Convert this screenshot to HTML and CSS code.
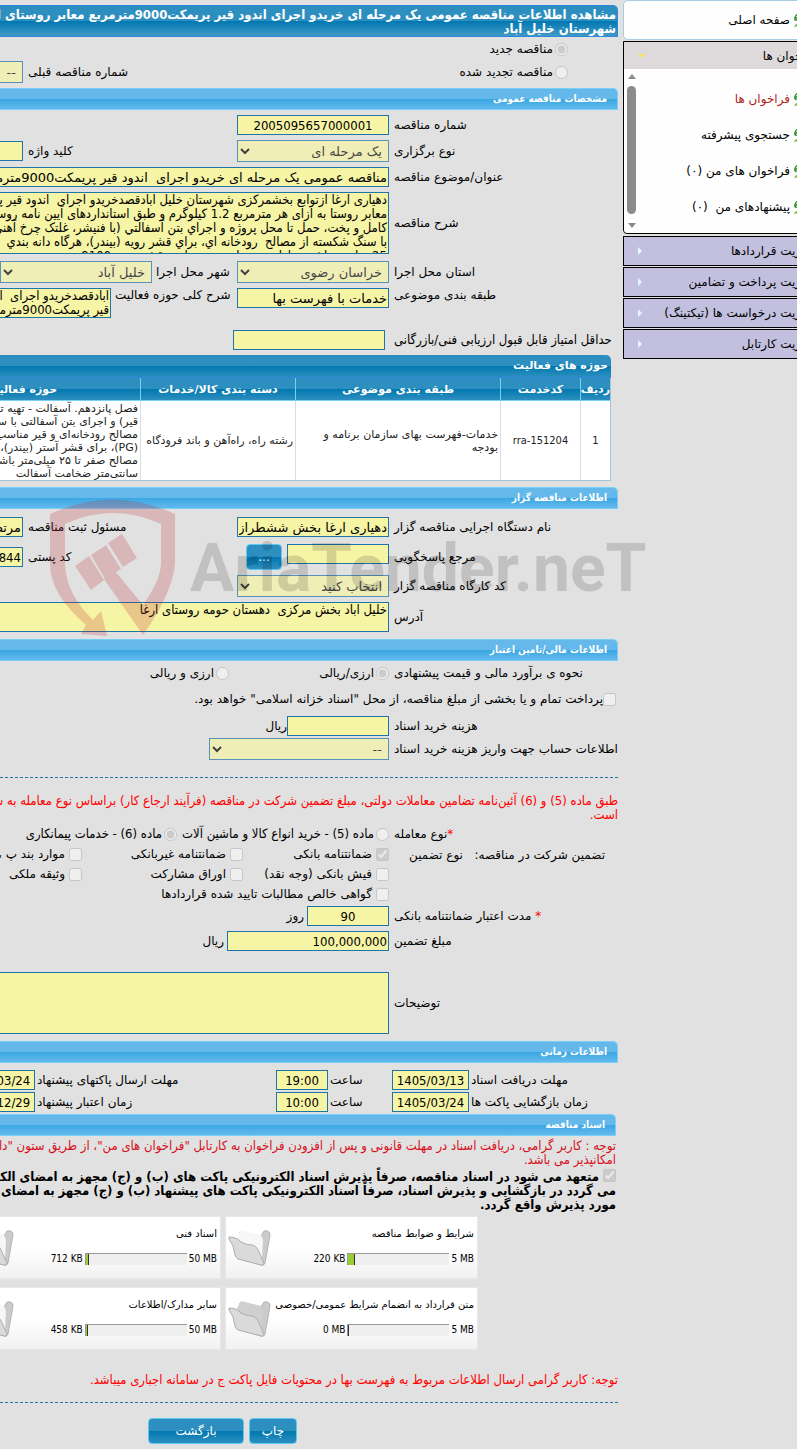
FILE: index.html
```html
<!DOCTYPE html>
<html lang="fa" dir="rtl">
<head>
<meta charset="utf-8">
<title>مشاهده اطلاعات مناقصه عمومی</title>
<link rel="stylesheet" href="styles.css">
</head>
<body>
<svg class="defs" aria-hidden="true">
  <symbol id="swirl" viewBox="0 0 18 18">
    <path d="M10 1C4 1 0 4 0 8q0 2 3 2C2 7 3 4 10 4z" fill="#3f9a35"/>
    <path d="M2 6q1-3 6-3" stroke="#c9ecbb" fill="none"/>
    <path d="M0 16c2-4 5-6 12-7-4 4-7 7-12 7z" fill="#7cbf3a"/>
  </symbol>
  <symbol id="folder" viewBox="0 0 44 40">
    <path d="M11 8L12 4 33 8 36 3Q42 2 42 7L37 35Q36 38 33 37L12 30Z" fill="#cbcbcb" stroke="#b4b4b4"/>
    <path class="paper" d="M9 9L13 2 33 7 35 12 34 30 14 24Z"/>
    <path d="M1 9Q9 9 13 14 18 17 24 17 29 18 31 24L36 35Q36 38 33 37L10 31Q8 30 7 27 6 17 1 11Z" fill="#dadada" stroke="#acacac"/>
  </symbol>
</svg>
<div class="page">
  <nav class="side">
    <div class="side-inner">
      <a class="home" href="#"><svg class="swirl"><use href="#swirl"/></svg>صفحه اصلی</a>
      <div class="group open">
        <button class="group-head" type="button">فراخوان ها<span class="tri down"></span></button>
        <div class="submenu">
          <div class="scroll"><span class="up"></span><span class="thumb"></span><span class="dn"></span></div>
          <a class="active" href="#"><svg class="swirl"><use href="#swirl"/></svg>فراخوان ها</a>
          <a href="#"><svg class="swirl"><use href="#swirl"/></svg>جستجوی پیشرفته</a>
          <a href="#"><svg class="swirl"><use href="#swirl"/></svg>فراخوان های من (۰)</a>
          <a href="#"><svg class="swirl"><use href="#swirl"/></svg>پیشنهادهای من &nbsp;(۰)</a>
        </div>
      </div>
      <button class="group-head closed" type="button">مدیریت قراردادها<span class="tri"></span></button>
      <button class="group-head closed" type="button">مدیریت پرداخت و تضامین<span class="tri"></span></button>
      <button class="group-head closed" type="button">مدیریت درخواست ها (تیکتینگ)<span class="tri"></span></button>
      <button class="group-head closed" type="button">مدیریت کارتابل<span class="tri"></span></button>
    </div>
  </nav>

  <main class="main">
    <h1 class="title">مشاهده اطلاعات مناقصه عمومی یک مرحله ای خریدو اجرای اندود قیر پریمکت9000مترمربع معابر روستای ارغا<br>شهرستان خلیل آباد</h1>

    <div class="row kind">
      <label class="opt"><input type="radio" name="kind" checked disabled>مناقصه جدید</label>
    </div>
    <div class="row kind">
      <label class="opt renewed"><input type="radio" name="kind" disabled>مناقصه تجدید شده</label>
      <label class="label2 previous" for="prev">شماره مناقصه قبلی</label>
      <select id="prev" disabled><option>--</option></select>
    </div>

    <h2 class="bar">مشخصات مناقصه عمومی</h2>
    <div class="row"><label class="label" for="num">شماره مناقصه</label><input class="mid num" id="num" value="2005095657000001" readonly></div>
    <div class="row">
      <label class="label" for="type">نوع برگزاری</label><select id="type" disabled><option>یک مرحله ای</option></select>
      <label class="label2" for="key">کلید واژه</label><input id="key" readonly>
    </div>
    <div class="row"><label class="label" for="subj">عنوان/موضوع مناقصه</label><input class="long" id="subj" value="مناقصه عمومی یک مرحله ای خریدو اجرای  اندود قیر پریمکت9000مترمربع معابر روستای ارغا" readonly></div>
    <div class="row"><label class="label" for="desc">شرح مناقصه</label><textarea class="long tall" id="desc" readonly>دهیاری ارغا ازتوابع بخشمرکزی شهرستان خلیل آبادقصدخریدو اجرای  اندود قیر پریمکت
معابر روستا به ازای هر مترمربع 1.2 کیلوگرم و طبق استانداردهای آیین نامه روستا
کامل و پخت، حمل تا محل پروژه و اجراي بتن آسفالتي (با فنیشر، غلتک چرخ آهنی
با سنگ شکسته از مصالح  رودخانه اي، براي قشر رویه (بیندر)، هرگاه دانه بندي
25 میلیمتر باشد به ازای هر سانتیمتر ضخامت قشر بیندر 9100</textarea></div>
    <div class="row far">
      <label class="label" for="prov">استان محل اجرا</label><select id="prov" disabled><option>خراسان رضوی</option></select>
      <label class="label2 city" for="city">شهر محل اجرا</label><select id="city" disabled><option>خلیل آباد</option></select>
    </div>
    <div class="row top">
      <label class="label" for="cat">طبقه بندی موضوعی</label><input id="cat" value="خدمات با فهرست بها" readonly>
      <label class="label2 act" for="act">شرح کلی حوزه فعالیت</label><textarea id="act" readonly>آبادقصدخریدو اجرای  اندود
قیر پریمکت9000مترمربع</textarea>
    </div>
    <div class="row far2"><label class="label dense" for="score">حداقل امتیاز قابل قبول ارزیابی فنی/بازرگانی</label><input class="inset" id="score" readonly></div>

    <table class="acts">
      <caption>حوزه های فعالیت</caption>
      <thead><tr><th class="c1">ردیف</th><th class="c2">کدخدمت</th><th class="c3">طبقه بندی موضوعی</th><th class="c4">دسته بندی کالا/خدمات</th><th class="c5">حوزه فعالیت</th></tr></thead>
      <tbody><tr><td class="ctr">1</td><td class="ctr">rra-151204</td><td>خدمات-فهرست بهای سازمان برنامه و<br>بودجه</td><td>رشته راه، راه‌آهن و باند فرودگاه</td>
      <td class="clip">فصل پانزدهم. آسفالت - تهیه تمام مصالح<br>قیر) و اجرای بتن آسفالتی با سنگ<br>مصالح رودخانه‌ای و قیر مناسب<br>(PG)، برای قشر آستر (بیندر)،<br>مصالح صفر تا ۲۵ میلی‌متر باشد<br>سانتی‌متر ضخامت آسفالت</td></tr></tbody>
    </table>

    <h2 class="bar wide">اطلاعات مناقصه گزار</h2>
    <div class="row loose">
      <label class="label" for="org">نام دستگاه اجرایی مناقصه گزار</label><input id="org" value="دهیاری ارغا بخش ششطراز" readonly>
      <label class="label2" for="resp">مسئول ثبت مناقصه</label><input id="resp" value="مرتضی" readonly>
    </div>
    <div class="row far">
      <label class="label" for="ref">مرجع پاسخگویی</label><span class="pair"><input class="w102" id="ref" readonly><button class="btn dots" type="button">...</button></span>
      <label class="label2" for="post">کد پستی</label><input class="ltr num" id="post" value="9671844" readonly>
    </div>
    <div class="row"><label class="label" for="shop">کد کارگاه مناقصه گزار</label><select id="shop" disabled><option>انتخاب کنید</option></select></div>
    <div class="row"><label class="label" for="addr">آدرس</label><textarea class="long" id="addr" readonly>خلیل آباد بخش مرکزی  دهستان حومه روستای ارغا</textarea></div>

    <h2 class="bar wide">اطلاعات مالی/تامین اعتبار</h2>
    <div class="row tight">
      <span class="label">نحوه ی برآورد مالی و قیمت پیشنهادی</span>
      <label class="opt w160"><input type="radio" name="cur" checked disabled>ارزی/ریالی</label>
      <label class="opt"><input type="radio" name="cur" disabled>ارزی و ریالی</label>
    </div>
    <div class="row tax"><label class="opt"><input type="checkbox" disabled>پرداخت تمام و یا بخشی از مبلغ مناقصه، از محل "اسناد خزانه اسلامی" خواهد بود.</label></div>
    <div class="row far"><label class="label" for="fee">هزینه خرید اسناد</label><input class="w102" id="fee" readonly><span>ریال</span></div>
    <div class="row tight"><label class="label" for="acc">اطلاعات حساب جهت واریز هزینه خرید اسناد</label><select class="w180" id="acc" disabled><option>--</option></select></div>
    <hr>
    <p class="dense red">طبق ماده (5) و (6) آئین‌نامه تضامین معاملات دولتی، مبلغ تضمین شرکت در مناقصه (فرآیند ارجاع کار) براساس نوع معامله به شرح<br>است.</p>
    <div class="row tight">
      <span class="label"><b class="req">*</b>نوع معامله</span>
      <label class="opt w212 dense"><input type="radio" name="deal" disabled>ماده (5) - خرید انواع کالا و ماشین آلات</label>
      <label class="opt dense"><input type="radio" name="deal" checked disabled>ماده (6) - خدمات پیمانکاری</label>
    </div>
    <div class="guar">
      <span class="label split"><span>تضمین شرکت در مناقصه:</span><span>نوع تضمین</span></span>
      <div class="checks">
        <label class="opt"><input type="checkbox" checked disabled>ضمانتنامه بانکی</label>
        <label class="opt"><input type="checkbox" disabled>ضمانتنامه غیربانکی</label>
        <label class="opt"><input type="checkbox" disabled>موارد بند پ ،</label>
        <label class="opt"><input type="checkbox" disabled>فیش بانکی (وجه نقد)</label>
        <label class="opt"><input type="checkbox" disabled>اوراق مشارکت</label>
        <label class="opt"><input type="checkbox" disabled>وثیقه ملکی</label>
        <label class="opt all"><input type="checkbox" disabled>گواهی خالص مطالبات تایید شده قراردادها</label>
      </div>
    </div>
    <div class="row tight"><label class="label" for="days"><b class="req">*</b> مدت اعتبار ضمانتنامه بانکی</label><input class="w82 mid num" id="days" value="90" readonly><span class="unit">روز</span></div>
    <div class="row"><label class="label" for="amt">مبلغ تضمین</label><input class="w162 num" id="amt" value="100,000,000" readonly><span class="unit">ریال</span></div>
    <div class="row remarks"><label class="label" for="rem">توضیحات</label><textarea class="long tall" id="rem" readonly></textarea></div>

    <h2 class="bar wide">اطلاعات زمانی</h2>
    <div class="dates">
      <label for="d1">مهلت دریافت اسناد</label><input class="mid num" id="d1" value="1405/03/13" readonly>
      <label for="t1">ساعت</label><input class="mid num" id="t1" value="19:00" readonly>
      <label for="d2">مهلت ارسال پاکتهای پیشنهاد</label><input class="mid num" id="d2" value="1405/03/24" readonly>
      <label for="d3">زمان بازگشایی پاکت ها</label><input class="mid num" id="d3" value="1405/03/24" readonly>
      <label for="t2">ساعت</label><input class="mid num" id="t2" value="10:00" readonly>
      <label for="d4">زمان اعتبار پیشنهاد</label><input class="mid num" id="d4" value="1405/12/29" readonly>
    </div>

    <div class="docs">
      <h2 class="bar">اسناد مناقصه</h2>
      <p class="dense crimson">توجه : کاربر گرامی، دریافت اسناد در مهلت قانونی و پس از افزودن فراخوان به کارتابل "فراخوان های من"، از طریق ستون "دانلود<br>امکانپذیر می باشد.</p>
      <p class="dense pledge"><label><input type="checkbox" checked disabled> متعهد می شود در اسناد مناقصه، صرفاً پذیرش اسناد الکترونیکی پاکت های (ب) و (ج) مجهز به امضای الکترونیکی<br>می گردد در بازگشایی و پذیرش اسناد، صرفاً اسناد الکترونیکی پاکت های پیشنهاد (ب) و (ج) مجهز به امضای الکترونیکی<br>مورد پذیرش واقع گردد.</label></p>
    </div>
    <div class="cards">
      <div class="card"><div>شرایط و ضوابط مناقصه</div><div class="use"><span dir="ltr">5 MB</span><span class="meter"><i style="width:6px"></i></span><span dir="ltr">220 KB</span></div><svg class="folder full"><use href="#folder"/></svg></div>
      <div class="card"><div>اسناد فنی</div><div class="use"><span dir="ltr">50 MB</span><span class="meter"><i style="width:2px"></i></span><span dir="ltr">712 KB</span></div><svg class="folder full"><use href="#folder"/></svg></div>
      <div class="card"><div>متن قرارداد به انضمام شرایط عمومی/خصوصی</div><div class="use"><span dir="ltr">5 MB</span><span class="meter"><i style="width:0px"></i></span><span dir="ltr">0 MB</span></div><svg class="folder"><use href="#folder"/></svg></div>
      <div class="card"><div>سایر مدارک/اطلاعات</div><div class="use"><span dir="ltr">50 MB</span><span class="meter"><i style="width:1px"></i></span><span dir="ltr">458 KB</span></div><svg class="folder full"><use href="#folder"/></svg></div>
    </div>
    <p class="dense red last">توجه: کاربر گرامی ارسال اطلاعات مربوط به فهرست بها در محتویات فایل پاکت ج در سامانه اجباری میباشد.</p>
    <hr class="end">
    <div class="actions"><button class="btn print" type="button">چاپ</button><button class="btn back" type="button">بازگشت</button></div>
  </main>

  <div class="mark" aria-hidden="true">
    <svg class="shield" viewBox="0 0 126 140">
      <g fill="#c0272d">
        <path d="M0 15Q63-14 125 15V65Q122 95 93 136L54 80 65 72 93 106Q110 82 111 65V25Q63 3 15 25V65Q16 95 43 121L51 112 57 137 31 135 36 126Q0 95 0 65z"/>
        <path d="M25 67l14-10 15 24-13 10zM41 56l15-10 15 24-16 10zM58 44l14-9 15 24-14 9z"/>
      </g>
    </svg>
    <span>AriaTender.neT</span>
  </div>
</div>
</body>
</html>
```
FILE: styles.css
```css
* { box-sizing: border-box; }
body {
  margin: 0;
  background: #e1e1e1;
  color: #000;
  font: 12px/14px "DejaVu Sans", sans-serif;
  overflow-x: hidden;
}
a { color: inherit; text-decoration: none; }
p, h1, h2 { margin: 0; }
button, input, select, textarea { font-family: inherit; }
.defs { display: none; }
.page { position: relative; display: flex; gap: 5px; overflow: hidden; }

/* side menu */
.side { flex: 0 0 174px; direction: ltr; overflow: hidden; }
.side-inner { direction: rtl; width: 206px; white-space: nowrap; }
.home, .submenu a {
  display: flex;
  align-items: center;
  gap: 4px;
  padding-right: 16px;
}
.swirl { width: 18px; height: 18px; flex: none; }
.home { height: 40px; background: #fefefe; border: 1px solid #a9cce6; border-radius: 5px; }
.group { margin-top: 1px; border: 1px solid #000; border-radius: 0 0 4px 4px; }
.group-head {
  display: flex;
  align-items: center;
  justify-content: space-between;
  width: 100%;
  height: 27px;
  padding: 0 10px 0 14px;
  border: 0;
  background: #dedadb;
  font-size: 12px;
  line-height: 14px;
  color: #000;
}
.closed { height: 30px; margin-top: 1px; border: 1px solid #000; background: #c2c0de; }
.group + .closed { margin-top: 2px; }
.tri { border: 4px solid transparent; border-left-color: #e0fbff; border-right: 0; }
.tri.down { border: 4px solid transparent; border-top-color: #f5e06e; border-bottom: 0; }
.submenu { position: relative; background: #fefefe; height: 164px; padding-top: 12px; border-radius: 0 0 4px 4px; }
.submenu a { height: 36px; }
.submenu .active { color: #b22222; }
.scroll { position: absolute; left: 3px; top: 5px; bottom: 5px; width: 9px; display: flex; flex-direction: column; align-items: center; justify-content: space-between; }
.thumb { flex: 1; width: 9px; margin: 7px 0 9px; border-radius: 5px; background: #8b8b8b; }
.up, .dn { border: 4px solid transparent; }
.up { border-bottom: 5px solid #8b8b8b; border-top: 0; }
.dn { border-top: 5px solid #8b8b8b; border-bottom: 0; }

/* headings */
.main { flex: 1; min-width: 0; overflow: hidden; padding: 5px 0; white-space: nowrap; }
.title, .dense, textarea {
  font-family: "DejaVu Sans Condensed", "DejaVu Sans", sans-serif;
  font-size: 13px;
  line-height: 14px;
}
.title {
  min-height: 32px;
  padding: 2px 1px 0;
  border: 1px solid #2f87dd;
  border-left: 0;
  border-radius: 0 5px 0 0;
  background: linear-gradient(#2d8fbf 50%, #0077b0 50%, #4199c6);
  color: #fff;
}
.bar {
  height: 22px;
  margin-top: 5px;
  padding: 0 10px;
  border: 1px solid #78d0f8;
  border-left: 0;
  border-radius: 0 5px 0 0;
  background: linear-gradient(#64b9ea 50%, #3ba6e2 50%, #62b9ec);
  color: #fff;
  font-family: "DejaVu Sans Condensed", "DejaVu Sans", sans-serif;
  font-size: 10px;
  line-height: 20px;
}
.bar.wide { margin-top: 7px; }

/* form rows */
.row { display: flex; align-items: center; margin-top: 5px; min-height: 20px; }
.row > * { flex: none; }
.row.top { align-items: flex-start; }
.row.far { margin-top: 7px; }
.row.far2 { margin-top: 12px; }
.row.loose { margin-top: 8px; }
.row.tight { margin-top: 2px; }
.row.kind { margin-top: 1px; padding-right: 50px; height: 22px; }
.row.tax { margin-top: 6px; padding-right: 2px; }
.row.remarks { margin-top: 21px; }
.label { width: 224px; margin-left: 5px; text-align: left; }
.label2 { width: 209px; margin-left: 5px; text-align: left; }
.label2.city { width: 81px; margin-left: 4px; }
.label2.act { width: 122px; margin-left: 4px; }
.label2.previous { width: 394px; }
.renewed { width: 146px; }
input:not([type]), textarea, select {
  width: 152px;
  height: 20px;
  margin: 0;
  padding: 0 1px;
  border: 1px solid #1f74a8;
  border-radius: 0;
  background: #f6f4a5;
  color: #000;
  font-size: 13px;
}
input.num:not([type]) { font-family: "DejaVu Sans Condensed", "DejaVu Sans", sans-serif; }
select { height: 22px; padding: 0 2px; }
textarea { display: block; height: 30px; resize: none; overflow: hidden; white-space: pre; }
textarea.tall { height: 62px; }
input.long:not([type]), textarea.long { width: 760px; }
input.mid { text-align: center; }
input.ltr { direction: ltr; text-align: right; }
input.w82:not([type]) { width: 82px; }
input.w102:not([type]) { width: 102px; }
input.w162:not([type]) { width: 162px; }
select.w180 { width: 180px; }
input.inset:not([type]) { margin-right: 4px; }
.unit { margin-right: 3px; }
.pair { display: flex; gap: 5px; width: 152px; }
.opt { display: flex; align-items: center; gap: 2px; }
.opt input, .pledge input { width: 13px; height: 13px; margin: 0; }
.tax .opt { gap: 0; }
.w160 { width: 160px; }
.w212 { width: 212px; }
.req { color: #f00; font-weight: normal; }
hr { margin: 17px 0 16px; border: 0; border-top: 1px dashed #1f74a8; }
.red { color: #f00; }
.crimson { color: #d8101c; padding-top: 3px; }
.guar { display: flex; }
.guar .split { display: flex; justify-content: space-between; flex: none; padding: 4px 13px 0 15px; }
.checks { display: grid; grid-template-columns: 146px 161px 160px; grid-auto-rows: 20px; }
.checks .opt { gap: 4px; }
.checks .all { grid-column: 1 / 4; }

/* table */
.acts { width: 707px; margin: 5px 7px -1px 0; table-layout: fixed; border-collapse: separate; border-spacing: 0; background: #fff; border: 1px solid #a3c4dd; border-top: 0; font-size: 11px; line-height: 13px; color: #222; }
.acts caption { height: 23px; padding-right: 3px; text-align: right; font-weight: bold; line-height: 22px; color: #fff; background: linear-gradient(#2d8fbf 50%, #0077b0 50%, #2d8fbf); border-bottom: 1px solid #2f87dd; border-radius: 0 5px 0 0; }
.acts th { height: 23px; padding: 0; color: #fff; background: linear-gradient(#2d8fbf 50%, #0077b0 50%, #2d8fbf); border-bottom: 1px solid #78d0f8; border-left: 1px solid #78d0f8; }
.acts td { height: 79px; padding: 0 2px; border-left: 1px solid #ddd; }
.acts td.ctr { text-align: center; font-family: "DejaVu Sans Condensed", "DejaVu Sans", sans-serif; }
.acts td.clip { overflow: hidden; }
.c1 { width: 30px; }
.c2 { width: 80px; }
.c3 { width: 205px; }
.c4 { width: 155px; }
.c5 { width: 236px; }

/* dates */
.dates { display: grid; grid-template-columns: 149px 77px 64px 52px 241px 77px; row-gap: 2px; padding-top: 7px; align-items: center; }
.dates label { text-align: left; padding-left: 2px; }
.dates input:not([type]) { width: 100%; }

/* documents */
.docs { padding-right: 2px; }
.docs .bar { margin-top: 2px; }
.pledge { padding-top: 2px; font-weight: bold; }
.pledge input { vertical-align: -1px; }
.cards { display: grid; grid-template-columns: 253px 253px; gap: 8px 4px; padding: 4px 140px 0 0; font-size: 10px; line-height: 14px; }
.card { position: relative; height: 63px; padding: 10px 3px; border: 1px solid #e8e8e8; background: linear-gradient(#fff 50%, #f1f1f1); }
.use { display: flex; align-items: center; gap: 2px; margin-top: 11px; font-family: "DejaVu Sans Condensed", "DejaVu Sans", sans-serif; }
.meter { direction: ltr; width: 102px; height: 12px; background: #efefef; border: 1px solid #999; border-right: 0; border-bottom: 0; }
.meter i { display: block; box-sizing: content-box; height: 11px; background: #9acd32; border-right: 1px solid #333; }
.folder { position: absolute; left: 2px; top: 11px; width: 44px; height: 40px; }
.full { --paper: #f7f7f7; }
.paper { fill: var(--paper, #cfcfcf); }
.last { padding-top: 23px; }
.end { margin: 15px 0; }
.btn { height: 26px; border: 1px solid #5cc8f2; border-radius: 4px; background: linear-gradient(#2d8fbf 50%, #0077b0 50%, #2d8fbf); color: #fff; font-size: 12px; padding: 0; }
.dots { width: 36px; }
.actions { display: flex; gap: 5px; padding-right: 321px; }
.print { width: 48px; }
.back { width: 96px; }

/* watermark */
.mark { position: absolute; top: 499px; right: 149px; width: 598px; display: flex; direction: ltr; align-items: center; gap: 14px; pointer-events: none; }
.mark span { font: bold 66px/80px Roboto, "Liberation Sans", sans-serif; color: rgba(0, 0, 0, .14); }
.shield { flex: none; width: 126px; height: 140px; opacity: .22; }
```
